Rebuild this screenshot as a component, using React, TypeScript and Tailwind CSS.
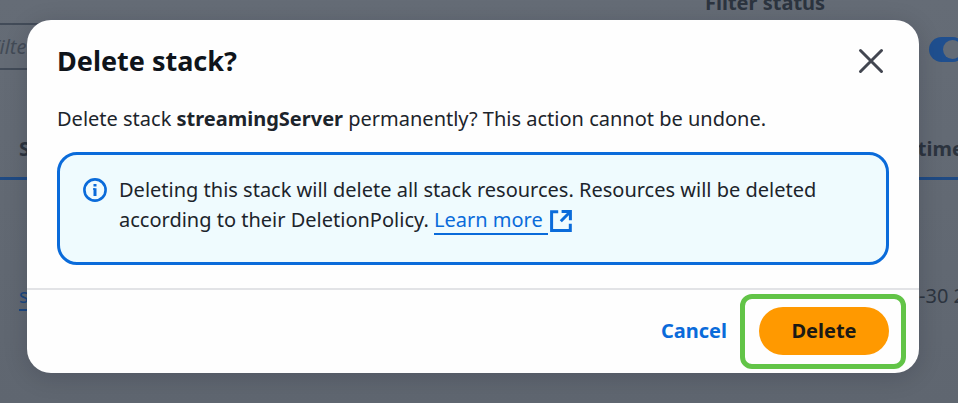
import React from "react";

function StacksPage() {
  return (
    <main className="h-full overflow-hidden bg-gradient-to-b from-[#656c76] via-[#626973] to-[#5f6670] text-[20px] leading-[30px] text-[#2c343f]">
      <div className="flex h-[114px] items-start justify-between">
        <label className="mt-[23px] -ml-10 flex h-[47px] w-[640px] items-center border-2 border-[#424b58]">
          <span className="sr-only">Filter stacks</span>
          <input
            type="text"
            placeholder="Filter by stack name"
            className="w-full bg-transparent pl-7 italic placeholder:text-[#434b57]"
          />
        </label>
        <div className="-mt-3 flex w-[253px] shrink-0 flex-col gap-[19px]">
          <span className="font-bold">Filter status</span>
          <label className="ml-[224px] flex h-[25px] w-9 items-center justify-end rounded-full bg-[#1f4f8f] p-[3px]">
            <span className="sr-only">View nested</span>
            <input type="checkbox" defaultChecked className="size-[19px] appearance-none rounded-full bg-[#636b76]" />
          </label>
        </div>
      </div>
      <table className="w-full table-fixed border-collapse text-left whitespace-nowrap">
        <thead>
          <tr className="h-16 border-b-3 border-[#1f4a83]">
            <th className="pt-2 pl-[19px] font-bold">Stack name</th>
            <th className="w-[124px] pt-2 font-bold">Created time</th>
          </tr>
        </thead>
        <tbody>
          <tr className="h-[234px]">
            <td className="pl-[19px]">
              <a href="#stack" className="border-b-2 border-[#1c4780] leading-[26px] text-[#1c4780]">streamingServer</a>
            </td>
            <td className="pl-[10px]">2023-04-30 20:15</td>
          </tr>
        </tbody>
      </table>
    </main>
  );
}

function InfoIcon() {
  return (
    <svg viewBox="0 0 24 24" className="mt-[3px] size-6 shrink-0 text-[#0a6bda]" fill="none" aria-hidden="true">
      <circle cx="12" cy="12" r="10.6" stroke="currentColor" strokeWidth="2.6" />
      <path d="M12 10.2v7.8M12 6v2.6" stroke="currentColor" strokeWidth="3" />
      <path d="M10 11h2" stroke="currentColor" strokeWidth="1.6" />
    </svg>
  );
}

function ExternalIcon() {
  return (
    <svg viewBox="0 0 22 22" className="size-[22px]" fill="none" stroke="currentColor" strokeWidth="3" aria-hidden="true">
      <path d="M8.2 1.7H1.6v18.7h18.7v-6.6" />
      <path d="M11.6 1.6h8.8v8.7M20 2l-9.2 9.2" />
    </svg>
  );
}

function DeleteDialog() {
  return (
    <section
      role="dialog"
      aria-labelledby="dialog-title"
      className="rounded-[24px] bg-[#fefefe] text-[20px] leading-[30px] text-[#1c242b] shadow-[0_4px_24px_rgba(0,7,22,0.16)]"
    >
      <header className="flex items-center justify-between px-[30px] pt-[22px]">
        <h2 id="dialog-title" className="text-[27px] leading-[38px] font-bold text-[#0f141a]">
          Delete stack?
        </h2>
        <button type="button" aria-label="Close" className="mr-[5px] text-[#424650]">
          <svg viewBox="0 0 26 26" className="size-[26px]" fill="none" stroke="currentColor" strokeWidth="3" strokeLinecap="round">
            <path d="M2.5 2.5l21 21M23.5 2.5l-21 21" />
          </svg>
        </button>
      </header>
      <div className="px-[30px] pt-6 pb-[23px]">
        <p>
          Delete stack <strong className="font-bold">streamingServer</strong> permanently? This action cannot be undone.
        </p>
        <div className="mt-[18px] flex min-h-[113px] items-start gap-3 rounded-[20px] border-3 border-[#0a6bda] bg-[#effbfe] px-[23px] pt-5">
          <InfoIcon />
          <p>
            Deleting this stack will delete all stack resources. Resources will be deleted according to their
            DeletionPolicy.{" "}
            <a href="#deletion-policy" className="inline-flex items-center gap-[2px] text-[#0a6bda]">
              <span className="border-b-2 border-[#0a6bda] pr-[5px] leading-[26px]">Learn more</span>
              <ExternalIcon />
            </a>
          </p>
        </div>
      </div>
      <footer className="flex items-center justify-end gap-8 border-t-2 border-[#e2e3e6] px-[30px] pt-[17px] pb-[18px] font-bold">
        <button type="button" className="text-[#0a6bda]">Cancel</button>
        <div className="relative">
          <button type="button" className="h-12 w-[130px] rounded-full bg-[#ff9900] text-[#1c1a14]">
            Delete
          </button>
          <span className="pointer-events-none absolute -top-[13px] -right-[17px] -bottom-[14px] -left-[19px] rounded-[12px] border-5 border-[#62c447]" />
        </div>
      </footer>
    </section>
  );
}

export default function App() {
  return (
    <div className="relative h-screen overflow-hidden font-['Noto_Sans','Open_Sans',sans-serif]">
      <StacksPage />
      <div className="absolute inset-0 pt-5 pr-[39px] pl-[27px]">
        <DeleteDialog />
      </div>
    </div>
  );
}
